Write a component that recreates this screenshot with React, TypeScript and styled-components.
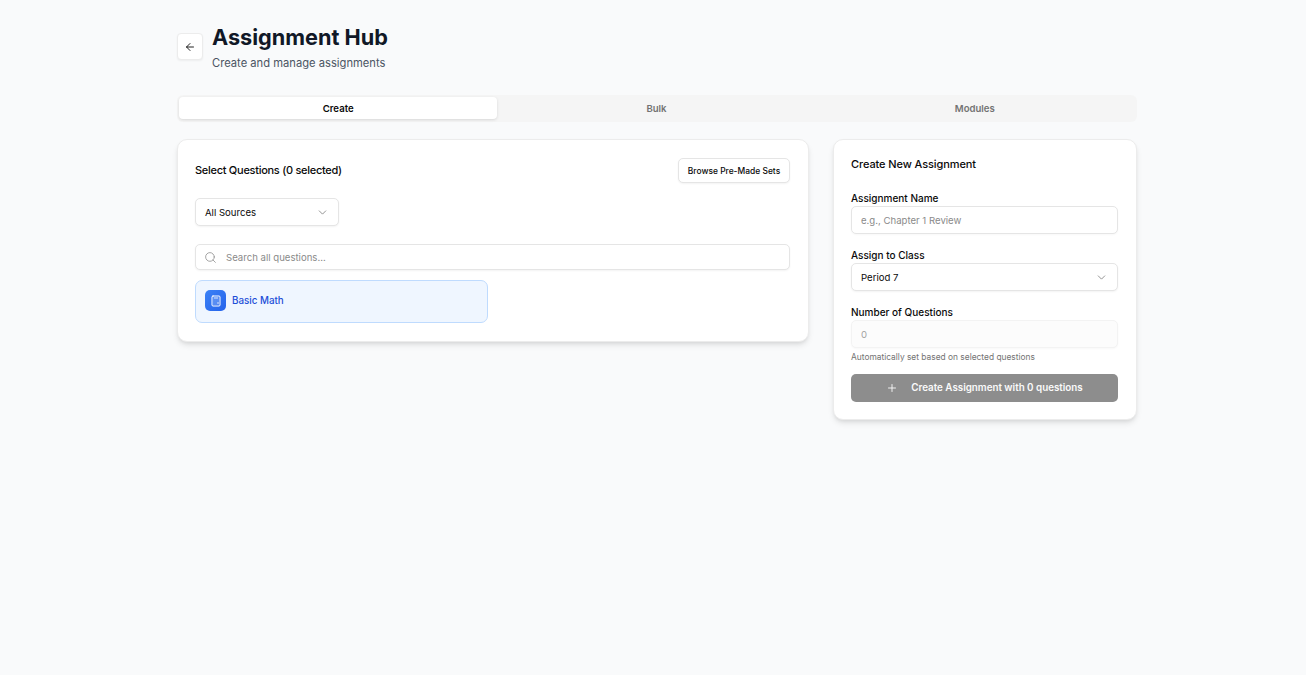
import React from "react";
import styled, { createGlobalStyle } from "styled-components";
import { ArrowLeft, ChevronDown, Search, Calculator, Plus } from "lucide-react";

const Global = createGlobalStyle`
  html, body { margin: 0; padding: 0; background: #f9fafb; }
  body { font-family: Inter, "Noto Sans", sans-serif; color: #0a0a0a; }
  * { box-sizing: border-box; }
  input::placeholder { color: #8a8a8a; opacity: 1; }
`;

const Page = styled.div`
  width: 960px;
  margin-left: 177px;
  padding-top: 24px;
  min-height: 675px;
`;
const Header = styled.header`
  display: flex;
  align-items: center;
  gap: 9px;
  height: 46px;
  margin-bottom: 25px;
`;
const BackButton = styled.button`
  width: 26px;
  height: 27px;
  margin-top: -1px;
  padding: 0;
  display: flex;
  align-items: center;
  justify-content: center;
  background: #fff;
  border: 1px solid #ececec;
  border-radius: 4px;
  box-shadow: 0 1px 2px rgba(0, 0, 0, 0.05);
  color: #0a0a0a;
`;
const TitleBlock = styled.div`
  display: flex;
  flex-direction: column;
`;
const Title = styled.h1`
  margin: 0;
  font-size: 21.7px;
  line-height: 27px;
  font-weight: 700;
  color: #111827;
`;
const Subtitle = styled.p`
  margin: 4px 0 0;
  font-size: 11.2px;
  line-height: 16px;
  color: #4b5563;
`;
const Tabs = styled.div`
  display: grid;
  grid-template-columns: repeat(3, 1fr);
  height: 27px;
  padding: 2px 3px 3px 2px;
  background: #f5f5f5;
  border-radius: 6px;
  margin-bottom: 17px;
`;
const Tab = styled.div<{ $active?: boolean }>`
  display: flex;
  align-items: center;
  justify-content: center;
  font-size: 9.6px;
  font-weight: 600;
  border-radius: 4px;
  color: ${(p) => (p.$active ? "#0a0a0a" : "#737373")};
  background: ${(p) => (p.$active ? "#fff" : "transparent")};
  box-shadow: ${(p) => (p.$active ? "0 1px 3px rgba(0,0,0,.12)" : "none")};
`;
const Columns = styled.div`
  display: grid;
  grid-template-columns: repeat(3, 1fr);
  gap: 24px;
  align-items: start;
`;
const Card = styled.section<{ $span?: number }>`
  grid-column: span ${(p) => p.$span ?? 1};
  background: #fff;
  border: 1px solid #ececec;
  border-radius: 10px;
  box-shadow: 0 4px 6px -1px rgba(0, 0, 0, 0.1), 0 2px 4px -2px rgba(0, 0, 0, 0.1);
  padding: 17px 18px 17px 17px;
`;
const CardTop = styled.div`
  display: flex;
  align-items: center;
  justify-content: space-between;
  height: 25px;
  margin-top: 1px;
  margin-bottom: 15px;
`;
const CardTitle = styled.h2`
  margin: 0 0 2px;
  font-size: 11px;
  line-height: 16px;
  font-weight: 500;
  letter-spacing: -0.28px;
  color: #0a0a0a;
`;
const OutlineButton = styled.button`
  height: 25px;
  width: 112px;
  padding: 0;
  font: 500 8.45px Inter, sans-serif;
  color: #0a0a0a;
  background: #fff;
  border: 1px solid #e5e5e5;
  border-radius: 5px;
  box-shadow: 0 1px 2px rgba(0, 0, 0, 0.05);
`;
const SelectBox = styled.div<{ $width?: number }>`
  display: flex;
  align-items: center;
  justify-content: space-between;
  width: ${(p) => (p.$width ? `${p.$width}px` : "100%")};
  height: 28px;
  padding: 0 9px;
  font-size: 9.6px;
  color: #0a0a0a;
  background: #fff;
  border: 1px solid #e5e5e5;
  border-radius: 5px;
  box-shadow: 0 1px 2px rgba(0, 0, 0, 0.05);
  svg { color: #737373; }
`;
const SearchBox = styled.div`
  display: flex;
  align-items: center;
  gap: 9px;
  height: 26px;
  margin-top: 18px;
  padding: 0 8px;
  background: #fff;
  border: 1px solid #e5e5e5;
  border-radius: 5px;
  box-shadow: 0 1px 2px rgba(0, 0, 0, 0.05);
  svg { color: #8a8a8a; flex: none; }
`;
const PlainInput = styled.input`
  flex: 1;
  min-width: 0;
  border: 0;
  outline: 0;
  padding: 0;
  background: transparent;
  font: 400 9.6px Inter, sans-serif;
  &:disabled::placeholder { color: #a3a3a3; }
`;
const SourceGrid = styled.div`
  display: grid;
  grid-template-columns: 293px 1fr;
  gap: 12px;
  margin-top: 10px;
  margin-bottom: 1px;
`;
const SourceCard = styled.div`
  display: flex;
  align-items: center;
  gap: 6px;
  height: 43px;
  padding: 0 9px 2px;
  background: #eff6ff;
  border: 1px solid #bfdbfe;
  border-radius: 7px;
`;
const SourceIcon = styled.span`
  display: flex;
  align-items: center;
  justify-content: center;
  width: 21px;
  height: 21px;
  border-radius: 5px;
  background: linear-gradient(135deg, #3b82f6, #2563eb);
  color: #fff;
`;
const SourceName = styled.span`
  font-size: 9.8px;
  font-weight: 500;
  color: #1d4ed8;
`;
const FormTitle = styled(CardTitle)`
  letter-spacing: -0.1px;
  margin: -1px 0 19px;
`;
const Field = styled.div`
  margin-bottom: 14px;
  &:last-of-type { margin-bottom: 11px; }
`;
const Label = styled.label`
  display: block;
  font-size: 10px;
  line-height: 14px;
  font-weight: 500;
  color: #0a0a0a;
  margin-bottom: 1px;
`;
const InputFrame = styled.div<{ $disabled?: boolean }>`
  display: flex;
  align-items: center;
  height: 28px;
  padding: 0 9px;
  background: ${(p) => (p.$disabled ? "#fcfcfc" : "#fff")};
  border: 1px solid ${(p) => (p.$disabled ? "#f3f3f3" : "#e5e5e5")};
  border-radius: 5px;
  box-shadow: 0 1px 2px rgba(0, 0, 0, 0.03);
`;
const Hint = styled.p`
  margin: 3px 0 0;
  font-size: 8.4px;
  line-height: 12px;
  color: #737373;
`;
const SubmitButton = styled.button`
  display: flex;
  align-items: center;
  justify-content: center;
  gap: 13px;
  width: 100%;
  height: 28px;
  padding: 0 0 1px;
  background: #8d8d8d;
  border: 0;
  border-radius: 5px;
  color: #fafafa;
  font: 600 9.8px Inter, sans-serif;
`;

export default function App() {
  return (
    <>
      <Global />
      <Page>
        <Header>
          <BackButton aria-label="Back">
            <ArrowLeft size={12} strokeWidth={1.8} />
          </BackButton>
          <TitleBlock>
            <Title>Assignment Hub</Title>
            <Subtitle>Create and manage assignments</Subtitle>
          </TitleBlock>
        </Header>
        <Tabs>
          <Tab $active>Create</Tab>
          <Tab>Bulk</Tab>
          <Tab>Modules</Tab>
        </Tabs>
        <Columns>
          <Card $span={2}>
            <CardTop>
              <CardTitle>Select Questions (0 selected)</CardTitle>
              <OutlineButton>Browse Pre-Made Sets</OutlineButton>
            </CardTop>
            <SelectBox $width={144}>
              All Sources
              <ChevronDown size={13} strokeWidth={1.4} />
            </SelectBox>
            <SearchBox>
              <Search size={13} strokeWidth={1.4} />
              <PlainInput placeholder="Search all questions..." />
            </SearchBox>
            <SourceGrid>
              <SourceCard>
                <SourceIcon>
                  <Calculator size={12} strokeWidth={2} />
                </SourceIcon>
                <SourceName>Basic Math</SourceName>
              </SourceCard>
            </SourceGrid>
          </Card>
          <Card>
            <FormTitle>Create New Assignment</FormTitle>
            <Field>
              <Label>Assignment Name</Label>
              <InputFrame>
                <PlainInput placeholder="e.g., Chapter 1 Review" />
              </InputFrame>
            </Field>
            <Field>
              <Label>Assign to Class</Label>
              <SelectBox>
                Period 7
                <ChevronDown size={13} strokeWidth={1.4} />
              </SelectBox>
            </Field>
            <Field>
              <Label>Number of Questions</Label>
              <InputFrame $disabled>
                <PlainInput placeholder="0" disabled />
              </InputFrame>
              <Hint>Automatically set based on selected questions</Hint>
            </Field>
            <SubmitButton disabled>
              <Plus size={12} strokeWidth={1.8} />
              Create Assignment with 0 questions
            </SubmitButton>
          </Card>
        </Columns>
      </Page>
    </>
  );
}
